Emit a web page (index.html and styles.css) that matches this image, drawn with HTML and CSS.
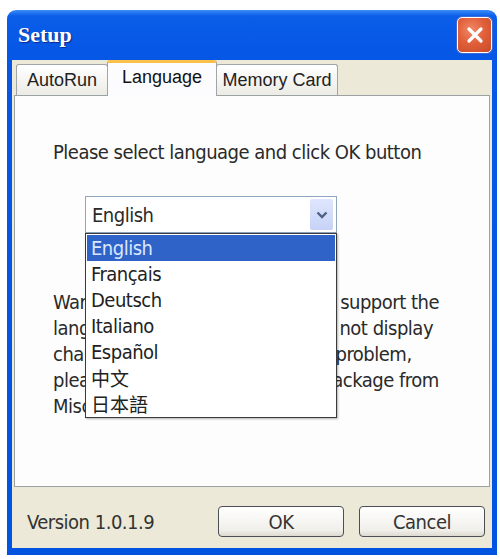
FILE: index.html
```html
<!DOCTYPE html>
<html lang="en">
<head>
<meta charset="utf-8">
<title>Setup</title>
<link rel="stylesheet" href="styles.css">
</head>
<body>
<div class="window">
  <div class="titlebar">
    <span class="title">Setup</span>
    <button class="close" aria-label="Close">
      <svg width="20" height="20" viewBox="0 0 20 20"><path d="M4 4 L16 16 M16 4 L4 16" stroke="#fff" stroke-width="3.2" stroke-linecap="round"/></svg>
    </button>
  </div>
  <div class="client">
    <div class="tabs">
      <div class="tab tab-autorun">AutoRun</div>
      <div class="tab tab-language active">Language</div>
      <div class="tab tab-memory">Memory Card</div>
    </div>
    <div class="panel">
      <p class="prompt">Please select language and click OK button</p>
      <div class="combo">
        <span class="combo-value">English</span>
        <span class="combo-btn">
          <svg width="12" height="8" viewBox="0 0 12 8"><path d="M1.5 1.5 L6 6 L10.5 1.5" fill="none" stroke="#4d6185" stroke-width="2.4"/></svg>
        </span>
      </div>
      <p class="warn">Warning: If your system does not support the<br>language you select, the PC may not display<br>characters accurately. To fix this&nbsp; problem,<br>please install the CJK language package from<br>Misc. setup.</p>
      <ul class="list">
        <li class="selected">English</li>
        <li>Français</li>
        <li>Deutsch</li>
        <li>Italiano</li>
        <li>Español</li>
        <li class="cjk">中文</li>
        <li class="cjk">日本語</li>
      </ul>
    </div>
    <div class="footer">
      <span class="version">Version 1.0.1.9</span>
      <button class="btn">OK</button>
      <button class="btn">Cancel</button>
    </div>
  </div>
</div>
</body>
</html>
```
FILE: styles.css
```css
html, body {
  margin: 0;
  padding: 0;
  background: #ffffff;
}
body {
  padding: 10px 3px 4px 7px;
  font-family: "DejaVu Sans Condensed", "DejaVu Sans", sans-serif;
  font-stretch: condensed;
  letter-spacing: -0.5px;
}
.window {
  width: 490px;
  height: 545px;
  display: flex;
  flex-direction: column;
  border-radius: 9px 9px 0 0;
  background: linear-gradient(to bottom, #3c8cf6 0px, #0a5ee8 6px, #0657e6 40px, #0054e0 100%);
  box-sizing: border-box;
}
.titlebar {
  height: 50px;
  display: flex;
  align-items: flex-start;
  padding: 0 5px 0 11px;
}
.title {
  font-family: "Liberation Serif", "DejaVu Serif", serif;
  font-stretch: normal;
  letter-spacing: 0;
  font-weight: bold;
  font-size: 22px;
  color: #ffffff;
  margin-top: 12px;
  text-shadow: 1px 1px 1px #0a2a88;
}
.close {
  margin-left: auto;
  margin-top: 7px;
  width: 35px;
  height: 36px;
  border: 1.5px solid #ffffff;
  border-radius: 5px;
  background: radial-gradient(circle at 40% 35%, #f08a68 0%, #e2603c 45%, #c74a25 100%);
  display: flex;
  align-items: center;
  justify-content: center;
  padding: 0;
  box-shadow: 0 0 0 1px #3a6ad8;
}
.client {
  flex: 1;
  margin: 0 5px 7px 5px;
  background: #ece9d8;
  display: flex;
  flex-direction: column;
}
.tabs {
  height: 35px;
  display: flex;
  align-items: flex-end;
  padding-left: 4px;
  position: relative;
  z-index: 1;
}
.tab {
  height: 31px;
  box-sizing: border-box;
  padding-top: 5px;
  text-align: center;
  font-family: "Liberation Sans", Arial, sans-serif;
  font-stretch: normal;
  letter-spacing: 0;
  font-size: 18px;
  color: #222;
  border: 1px solid #a0a6a8;
  border-bottom: none;
  border-radius: 3px 3px 0 0;
  background: linear-gradient(to bottom, #ffffff, #ecebe5);
  margin-right: -1px;
}
.tab-autorun { width: 92px; }
.tab-language { width: 110px; }
.tab-memory { width: 122px; }
.tab.active {
  height: 36px;
  margin-bottom: -1px;
  padding-top: 4px;
  background: #fcfcfe;
  border-top: 3px solid #fac04a;
  color: #111;
}
.panel {
  height: 392px;
  margin: 0 2px 0 2px;
  border: 1px solid #9aa2a4;
  background: #fdfdfd;
  position: relative;
  box-sizing: border-box;
}
.prompt {
  margin: 43px 0 0 0;
  padding-left: 38px;
  font-size: 20px;
  line-height: 26px;
  color: #2a2a2a;
}
.combo {
  margin: 31px 0 0 70px;
  width: 252px;
  height: 37px;
  box-sizing: border-box;
  border: 1px solid #8fa6c0;
  background: #ffffff;
  display: flex;
  align-items: center;
  padding: 2px 3px 2px 6px;
}
.combo-value {
  font-size: 20px;
  color: #2a2a2a;
}
.combo-btn {
  margin-left: auto;
  width: 23px;
  height: 31px;
  background: linear-gradient(to bottom, #dfe6fd, #c6d2f7);
  border-radius: 2px;
  display: flex;
  align-items: center;
  justify-content: center;
}
.warn {
  margin: 56px 0 0 0;
  padding-left: 38px;
  font-size: 20px;
  line-height: 26px;
  color: #2a2a2a;
  white-space: nowrap;
}
.list {
  position: absolute;
  left: 70px;
  top: 137px;
  width: 252px;
  height: 185px;
  box-sizing: border-box;
  margin: 0;
  padding: 1px;
  list-style: none;
  background: #ffffff;
  border: 1.5px solid #3a3a3a;
  box-shadow: 1px 1px 2px rgba(0,0,0,0.3);
}
.list li {
  height: 26px;
  line-height: 26px;
  padding-left: 4px;
  font-size: 20px;
  color: #222;
}
.list li.selected {
  background: #2f63c8;
  color: #dbe8ff;
}
.list li.cjk {
  font-family: "Noto Sans CJK SC", "DejaVu Sans", sans-serif;
  font-stretch: normal;
  letter-spacing: 0;
  font-size: 19px;
}
.footer {
  flex: 1;
  display: flex;
  align-items: center;
  padding: 8px 7px 0 15px;
  gap: 15px;
}
.version {
  margin-right: auto;
  font-size: 20px;
  color: #333;
}
.btn {
  width: 126px;
  height: 31px;
  font-family: "DejaVu Sans Condensed", "DejaVu Sans", sans-serif;
  font-stretch: condensed;
  letter-spacing: -0.5px;
  font-size: 20px;
  color: #333;
  background: linear-gradient(to bottom, #ffffff, #f0efea 80%, #dcdad0);
  border: 1.5px solid #4a4f55;
  border-radius: 4px;
  padding: 0;
}
```
